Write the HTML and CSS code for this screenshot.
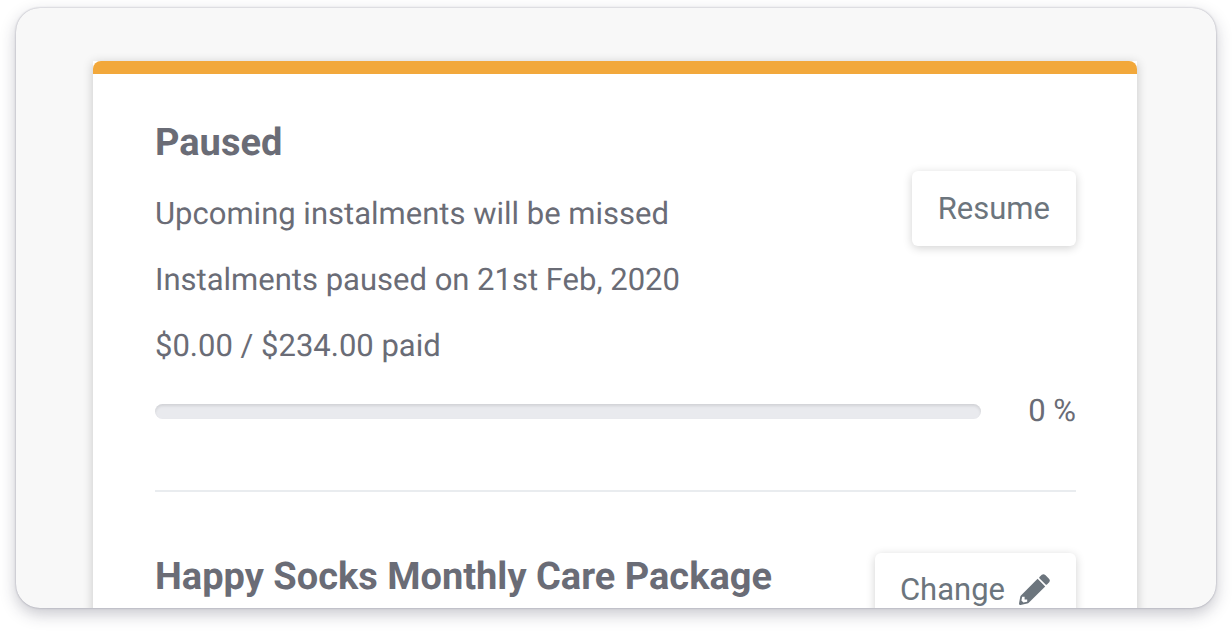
FILE: index.html
```html
<!doctype html>
<html lang="en">
<head>
	<title>Instalments</title>
	<meta charset="utf-8" />
	<link rel="stylesheet" href="styles.css">
</head>
<body>
	<main class="frame">
		<section class="card">
			<div class="card-bar"></div>
			<div class="card-body">
				<div class="status">
					<div class="status-text">
						<h2>Paused</h2>
						<p>Upcoming instalments will be missed</p>
						<p>Instalments paused on 21st Feb, 2020</p>
						<p id="paid">$0.00 / $234.00 paid</p>
					</div>
					<button class="btn resume" type="button">Resume</button>
				</div>
				<div class="progress-row">
					<div class="progress" role="progressbar" aria-labelledby="paid" aria-valuemin="0" aria-valuemax="100" aria-valuenow="0">
						<div class="progress-bar" style="width: 0%"></div>
					</div>
					<span class="percent">0 %</span>
				</div>
				<hr>
				<div class="package">
					<h2>Happy Socks Monthly Care Package</h2>
					<button class="btn change" type="button">
						Change
						<svg class="icon" viewBox="0 0 31 31" aria-hidden="true">
							<path d="M20.500 3L22.800 .8Q24.500-.6 26.300 1L30 4.700Q31.600 6.500 30.200 8.200L28 10.500Q27.300 11.100 26.600 10.400L20.600 4.400Q19.900 3.700 20.500 3z" />
							<path fill-rule="evenodd" d="M18.600 4.800L26.200 12.400L10 28.600Q9.200 29.400 8.200 29.600L1.500 31Q0 31.200 0 29.600L1.200 22.900Q1.400 21.900 2.200 21.200zM3.200 22.800L2.400 26.600L4.400 28.600L8.200 27.800L8.200 25.400L5.600 25.400L5.600 22.800z" />
						</svg>
					</button>
				</div>
			</div>
		</section>
	</main>
</body>
</html>
```

FILE: styles.css
```css
* {
	box-sizing: border-box;
}
html, body {
	height: 100%;
	margin: 0;
	overflow: hidden;
}
body {
	display: flex;
	padding: 8px 16px 24px;
	font-family: Roboto, sans-serif;
	font-size: 31px;
	line-height: 42px;
	color: #6a6c76;
	background-color: #fff;
	text-rendering: geometricPrecision;
}
.frame {
	flex: 1;
	min-width: 0;
	padding: 53px 79px 0 77px;
	overflow: hidden;
	border-radius: 24px;
	background-color: #f8f8f8;
	box-shadow: 0 0 2px rgba(40, 40, 70, 0.4), 0 6px 16px rgba(40, 40, 60, 0.26);
}
.card {
	height: 640px;
	background-color: #fff;
	box-shadow: 0 2px 10px rgba(0, 0, 0, 0.2);
}
.card-bar {
	height: 13px;
	border-radius: 8px 8px 0 0;
	background-color: #f2a83b;
}
.card-body {
	padding: 48px 61px 0 62px;
}
.status, .progress-row, .package {
	display: flex;
	justify-content: space-between;
}
.status {
	align-items: flex-start;
}
h2 {
	margin: 0;
	font-size: 38px;
	line-height: 42px;
	font-weight: bold;
}
p {
	margin: 24px 0 0;
}
.status h2 + p {
	margin-top: 29px;
}
.btn {
	height: 75px;
	padding: 0 26px;
	border: 0;
	border-radius: 6px;
	font: inherit;
	color: #6c757d;
	background-color: #fff;
	box-shadow: 0 2px 10px rgba(0, 0, 0, 0.18);
	cursor: pointer;
}
.resume {
	margin-top: 49px;
}
.progress-row {
	align-items: center;
	gap: 47px;
	margin-top: 23px;
}
.progress {
	flex: 1;
	height: 15px;
	overflow: hidden;
	border-radius: 8px;
	background-color: #e9eaee;
	box-shadow: inset 0 2px 3px rgba(0, 0, 0, 0.1);
}
.progress-bar {
	height: 100%;
	background-color: #f2a83b;
}
hr {
	margin: 58px 0 61px;
	border: 0;
	border-top: 2px solid #e9ecef;
}
.package {
	align-items: flex-start;
}
.package h2 {
	padding-top: 3px;
}
.change {
	display: flex;
	align-items: center;
	gap: 14px;
	padding: 0 26px 2px 25px;
}
.icon {
	width: 31px;
	height: 31px;
	fill: currentColor;
}
```
